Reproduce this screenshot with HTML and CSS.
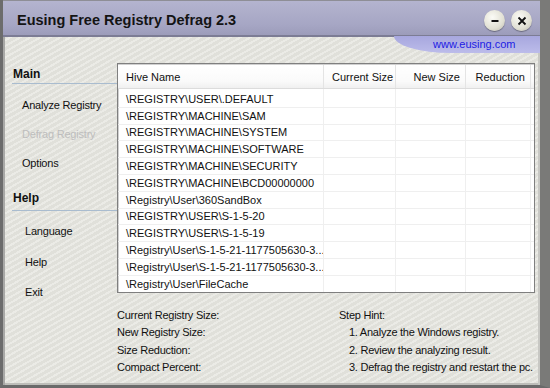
FILE: index.html
```html
<!DOCTYPE html>
<html lang="en">
<head>
    <meta charset="UTF-8">
    <title>Eusing Free Registry Defrag 2.3</title>
    <link rel="stylesheet" href="styles.css">
</head>
<body>
    <div class="window">
        <div class="titlebar">
            <span class="title">Eusing Free Registry Defrag 2.3</span>
            <div class="buttons">
                <span class="round-btn">
                    <svg width="10" height="10" viewBox="0 0 10 10"><path d="M1.5 5h7" stroke="#111" stroke-width="2"/></svg>
                </span>
                <span class="round-btn">
                    <svg width="10" height="10" viewBox="0 0 10 10"><path d="M1.5 1.5l7 7M8.5 1.5l-7 7" stroke="#111" stroke-width="1.8"/></svg>
                </span>
            </div>
        </div>
        <div class="url-tab">www.eusing.com</div>

        <div class="main">
            <div class="sidebar">
                <div class="section-title main-title">Main</div>
                <div class="nav-item">Analyze Registry</div>
                <div class="nav-item disabled">Defrag Registry</div>
                <div class="nav-item">Options</div>
                <div class="section-title help-title">Help</div>
                <div class="nav-item boxed">Language</div>
                <div class="nav-item boxed">Help</div>
                <div class="nav-item boxed">Exit</div>
            </div>

            <div class="content">
                <div class="list">
                    <table>
                        <thead>
                            <tr>
                                <th class="col-name">Hive Name</th>
                                <th class="col-size">Current Size</th>
                                <th class="col-new">New Size</th>
                                <th class="col-red">Reduction</th>
                                <th class="col-rest"></th>
                            </tr>
                        </thead>
                        <tbody id="rows"></tbody>
                    </table>
                </div>

                <div class="summary">
                    <div class="stats">
                        <div>Current Registry Size:</div>
                        <div>New Registry Size:</div>
                        <div>Size Reduction:</div>
                        <div>Compact Percent:</div>
                    </div>
                    <div class="hints">
                        <div class="hint-title">Step Hint:</div>
                        <div class="hint">1. Analyze the Windows registry.</div>
                        <div class="hint">2. Review the analyzing result.</div>
                        <div class="hint">3. Defrag the registry and restart the pc.</div>
                    </div>
                </div>
            </div>
        </div>
    </div>

    <script>
        const hives = [
            "\\REGISTRY\\USER\\.DEFAULT",
            "\\REGISTRY\\MACHINE\\SAM",
            "\\REGISTRY\\MACHINE\\SYSTEM",
            "\\REGISTRY\\MACHINE\\SOFTWARE",
            "\\REGISTRY\\MACHINE\\SECURITY",
            "\\REGISTRY\\MACHINE\\BCD00000000",
            "\\Registry\\User\\360SandBox",
            "\\REGISTRY\\USER\\S-1-5-20",
            "\\REGISTRY\\USER\\S-1-5-19",
            "\\Registry\\User\\S-1-5-21-1177505630-3...",
            "\\Registry\\User\\S-1-5-21-1177505630-3...",
            "\\Registry\\User\\FileCache"
        ];

        const body = document.getElementById('rows');
        hives.forEach(function (name) {
            const tr = document.createElement('tr');
            tr.innerHTML = '<td></td><td></td><td></td><td></td><td></td>';
            tr.firstChild.textContent = name;
            body.appendChild(tr);
        });
    </script>
</body>
</html>
```

FILE: styles.css
```css
body {
    margin: 0;
    font-family: "Liberation Sans", Arial, sans-serif;
    font-size: 11px;
    color: #111;
    background: #fff;
}
.window {
    position: relative;
    width: 550px;
    height: 388px;
    box-sizing: border-box;
    background-color: #e4e4de;
    background-image: repeating-linear-gradient(150deg, rgba(255,255,255,0.25) 0 2px, rgba(0,0,0,0.02) 2px 5px);
    border-left: 3px solid #6c6c6c;
    border-right: 10px solid #7a7a78;
    border-bottom: 3px solid #6a6a6a;
    box-shadow: inset 2px 0 0 #a8a8a6, inset -2px 0 0 #c8c8c4, inset 0 -2px 0 #bdbdb9;
    display: flex;
    flex-direction: column;
}
.titlebar {
    height: 37px;
    box-sizing: border-box;
    background-color: #a9a9c6;
    background-image: linear-gradient(#b4b4cf, #a6a6c4 70%, #9c9cba);
    border-top: 1px solid #8e8e96;
    border-bottom: 2px solid #7c7c94;
    display: flex;
    align-items: center;
    justify-content: space-between;
    padding: 0 8px 0 14px;
    flex-shrink: 0;
}
.title {
    font-weight: bold;
    font-size: 14.5px;
    color: #141414;
    padding-top: 4px;
}
.buttons {
    display: flex;
    gap: 6px;
    padding-top: 5px;
}
.round-btn {
    width: 21px;
    height: 21px;
    border-radius: 50%;
    background: radial-gradient(circle at 40% 35%, #fbfbf6, #e1e0d4 60%, #b8b6a8);
    box-shadow: 0 1px 1px rgba(0,0,0,0.35);
    display: flex;
    align-items: center;
    justify-content: center;
}
.url-tab {
    position: absolute;
    top: 36px;
    right: 0;
    width: 146px;
    height: 17px;
    line-height: 16px;
    padding-left: 39px;
    box-sizing: border-box;
    background: linear-gradient(#a7a7de, #bcbcea);
    border-bottom-left-radius: 60px 18px;
    color: #1c1ce4;
    font-size: 11px;
}
.main {
    flex: 1;
    display: flex;
    padding-top: 26px;
}
.sidebar {
    width: 105px;
    padding-left: 9px;
    flex-shrink: 0;
    letter-spacing: -0.2px;
}
.section-title {
    font-weight: bold;
    font-size: 12px;
    padding-left: 1px;
    border-bottom: 1px solid #a9bccf;
    letter-spacing: 0;
}
.main-title {
    margin-top: 4px;
    padding-bottom: 2px;
    margin-bottom: 13px;
}
.help-title {
    margin-top: 19px;
    padding-bottom: 5px;
    margin-bottom: 12px;
}
.nav-item {
    height: 17px;
    line-height: 17px;
    padding-left: 10px;
    margin-bottom: 12px;
}
.nav-item.disabled {
    color: #bdbdbd;
}
.nav-item.boxed {
    margin-left: 8px;
    padding-left: 5px;
    margin-bottom: 13.5px;
}
.content {
    flex: 1;
}
.list {
    height: 230px;
    width: 418px;
    background: #fff;
    border: 1px solid #7f7f7f;
    box-shadow: inset 1px 1px 0 #d0d0d0;
    overflow: hidden;
    padding-top: 1px;
    box-sizing: border-box;
}
table {
    border-collapse: collapse;
    width: 100%;
    table-layout: fixed;
}
th {
    font-weight: normal;
    text-align: left;
    height: 22px;
    padding: 1px 5px 0 8px;
    border-right: 1px solid #e4e4e4;
    border-bottom: 1px solid #dcdcdc;
    background: linear-gradient(#fff, #fafafa 70%, #f0f0f0);
    white-space: nowrap;
}
th.col-size, th.col-new, th.col-red {
    text-align: right;
}
th.col-rest {
    border-right: none;
}
.col-name { width: 192px; }
.col-size { width: 58px; }
.col-new { width: 56px; }
.col-red { width: 51px; }
td {
    height: 15.8px;
    padding: 0 5px 0 8px;
    border-right: 1px solid #efefef;
    border-bottom: 1px solid #efefef;
    white-space: nowrap;
    overflow: hidden;
}
tbody tr:first-child td {
    padding-top: 2px;
}
td:last-child {
    border-right: none;
}
.summary {
    display: flex;
    padding-top: 14px;
    letter-spacing: -0.25px;
}
.stats {
    width: 222px;
    flex-shrink: 0;
}
.stats div, .hints div {
    height: 17.4px;
    line-height: 17px;
    white-space: nowrap;
}
.hint {
    padding-left: 10px;
}
```
